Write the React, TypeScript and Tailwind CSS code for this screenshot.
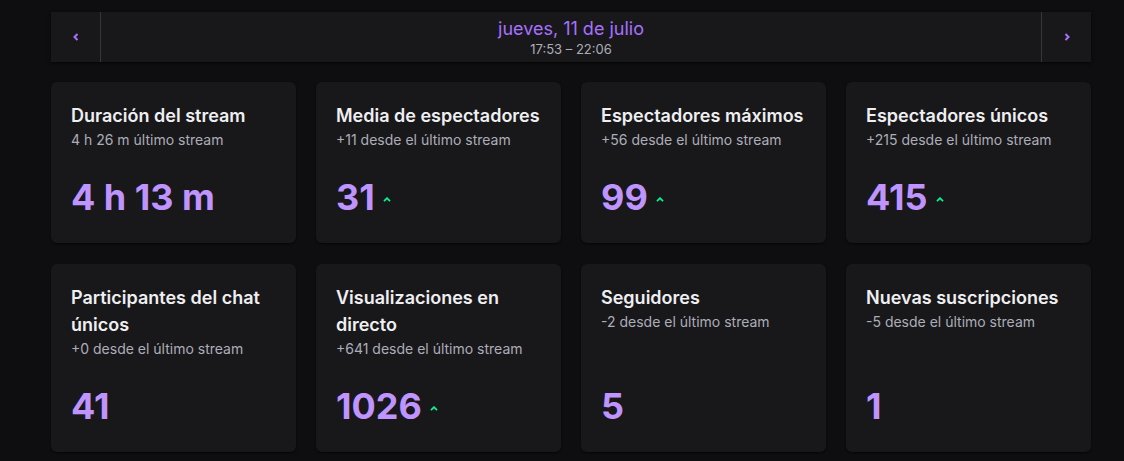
import { useState } from "react";

type Stat = {
  id: number;
  title: string;
  sub: string;
  value: string;
  up?: boolean;
};

const stats: Stat[] = [
  { id: 1, title: "Duración del stream", sub: "4 h 26 m último stream", value: "4 h 13 m" },
  { id: 2, title: "Media de espectadores", sub: "+11 desde el último stream", value: "31", up: true },
  { id: 3, title: "Espectadores máximos", sub: "+56 desde el último stream", value: "99", up: true },
  { id: 4, title: "Espectadores únicos", sub: "+215 desde el último stream", value: "415", up: true },
  { id: 5, title: "Participantes del chat únicos", sub: "+0 desde el último stream", value: "41" },
  { id: 6, title: "Visualizaciones en directo", sub: "+641 desde el último stream", value: "1026", up: true },
  { id: 7, title: "Seguidores", sub: "-2 desde el último stream", value: "5" },
  { id: 8, title: "Nuevas suscripciones", sub: "-5 desde el último stream", value: "1" },
];

function Chevron({ dir }: { dir: "left" | "right" }) {
  return (
    <svg width="6" height="8" viewBox="0 0 6 8" className={dir === "right" ? "rotate-180" : ""}>
      <path d="M4.5 1 L1.5 4 L4.5 7" fill="none" stroke="#a970ff" strokeWidth="2" />
    </svg>
  );
}

function UpArrow() {
  return (
    <svg width="8" height="5" viewBox="0 0 8 5" className="ml-2 mt-[5px]">
      <path d="M1 4.2 L4 1.2 L7 4.2" fill="none" stroke="#00f593" strokeWidth="1.8" />
    </svg>
  );
}

function StatCard({ stat }: { stat: Stat }) {
  return (
    <div className="bg-[#18181b] rounded-md pl-5 pr-3 pt-5 pb-[22px] flex flex-col shadow-[0_1px_2px_rgba(0,0,0,0.6)]">
      <h2 className="text-[18px] leading-[27px] font-semibold text-[#efeff1]">{stat.title}</h2>
      <p className="text-[14px] leading-[21px] text-[#adadb8]">{stat.sub}</p>
      <div className="mt-auto pt-[23px] flex items-center">
        <span className="text-[36px] leading-[48px] font-bold text-[#bf94ff]">{stat.value}</span>
        {stat.up && <UpArrow />}
      </div>
    </div>
  );
}

export default function App() {
  const [day] = useState("jueves, 11 de julio");

  return (
    <div className="h-[461px] overflow-hidden bg-[#0e0e10] font-['Inter',sans-serif] pt-3">
      <div className="w-[1040px] ml-[51px]">
        <div className="h-[50px] bg-[#18181b] flex shadow-[0_1px_3px_rgba(0,0,0,0.7)]">
          <button className="w-[50px] flex items-center justify-center border-r border-[#35353b]">
            <Chevron dir="left" />
          </button>
          <div className="flex-1 flex flex-col items-center justify-center">
            <span className="text-[18px] leading-[22px] text-[#a970ff]">{day}</span>
            <span className="text-[13px] leading-[16px] text-[#adadb8] mt-[1px]">17:53 – 22:06</span>
          </div>
          <button className="w-[50px] flex items-center justify-center border-l border-[#35353b]">
            <Chevron dir="right" />
          </button>
        </div>

        <div className="grid grid-cols-4 gap-x-5 gap-y-[21px] mt-5">
          {stats.map((s) => (
            <StatCard key={s.id} stat={s} />
          ))}
        </div>
      </div>
    </div>
  );
}
